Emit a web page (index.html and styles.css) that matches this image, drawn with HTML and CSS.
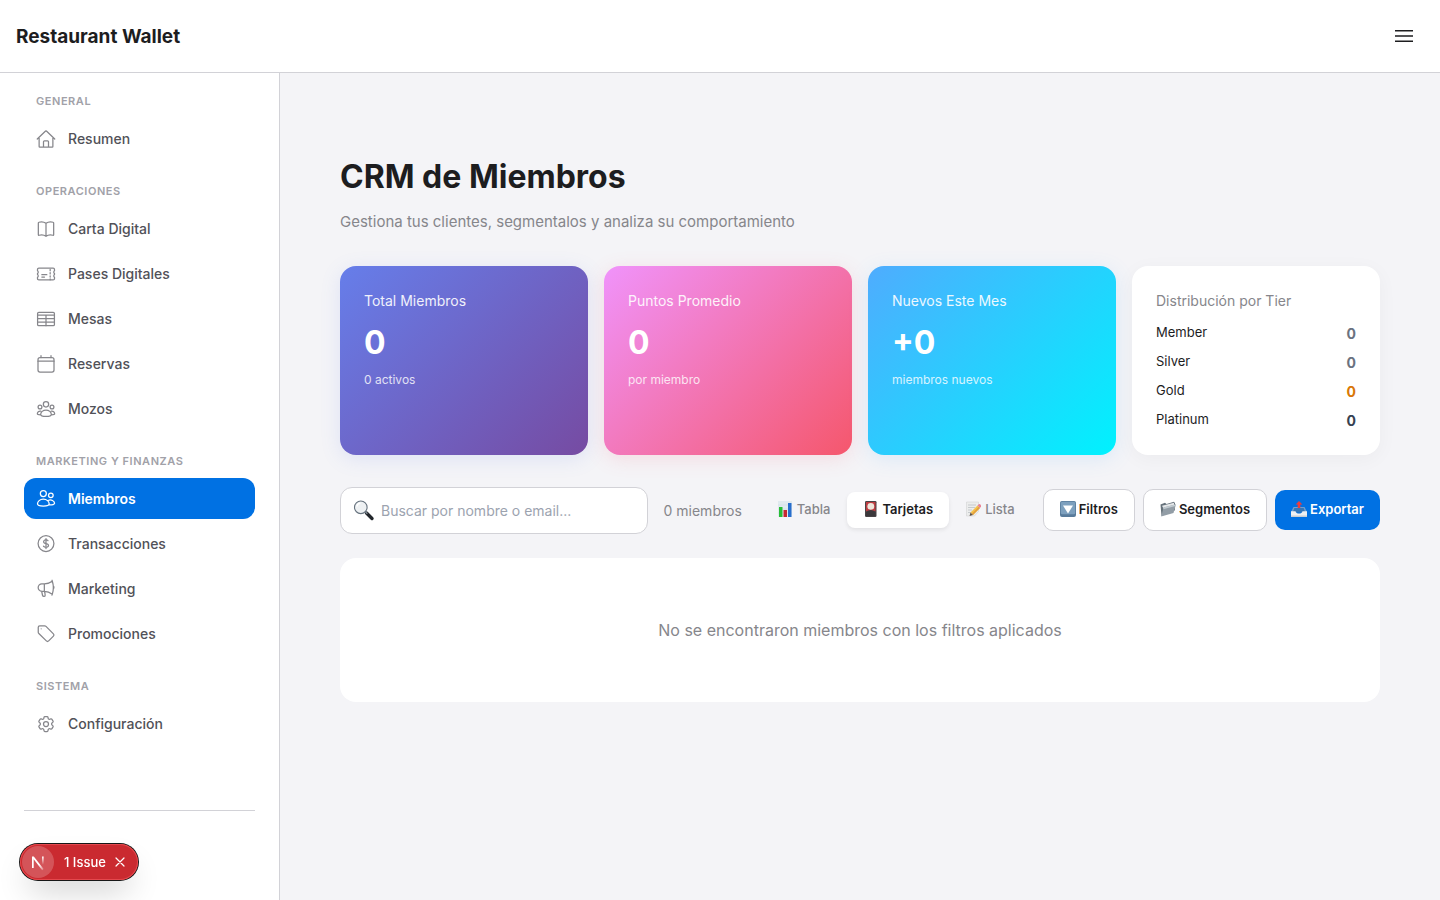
FILE: index.html
```html
<!DOCTYPE html>
<html lang="es">
<head>
    <meta charset="UTF-8">
    <meta name="viewport" content="width=device-width, initial-scale=1.0">
    <title>Restaurant Wallet</title>
    <link rel="stylesheet" href="styles.css">
</head>
<body>
    <header class="topbar">
        <div class="brand">Restaurant Wallet</div>
        <button class="menu-button" type="button" aria-label="Abrir menú">
            <svg width="24" height="24" viewBox="0 0 24 24"><path d="M3 6.75h18M3 12h18M3 17.25h18"/></svg>
        </button>
    </header>

    <div class="layout">
        <aside class="sidebar">
            <nav>
                <section class="nav-section">
                    <h2>General</h2>
                    <a href="#resumen" class="nav-item">
                        <svg viewBox="0 0 24 24"><path d="M3.75 9.9V21c0 .4.3.75.75.75h15c.4 0 .75-.3.75-.75V9.9M9 21.75v-6.4c0-.6.5-1.1 1.1-1.1h3.8c.6 0 1.1.5 1.1 1.1v6.4M22.5 12 12.5 2.4a.8.8 0 0 0-1 0L1.5 12"/></svg>
                        Resumen
                    </a>
                </section>

                <section class="nav-section">
                    <h2>Operaciones</h2>
                    <a href="#carta" class="nav-item">
                        <svg viewBox="0 0 24 24"><path d="M12 5.2C9.8 3.5 6 3 3.4 3.900c-.4.1-.6.4-.6.8v14.1c0 .5.4.8.9.7 2.6-.8 6-.5 8.3 1.3 2.3-1.8 5.7-2.1 8.3-1.3.5.1.9-.2.9-.7V4.700c0-.4-.2-.7-.6-.8C18 3 14.200 3.500 12 5.200zM12 5.200v15.600"/></svg>
                        Carta Digital
                    </a>
                    <a href="#pases" class="nav-item">
                        <svg viewBox="0 0 24 24"><path d="M3.4 5h17.2c.9 0 1.600.7 1.600 1.600v1.600a2 2 0 0 0 0 3.300v1.200a2 2 0 0 0 0 3.300v1.600c0 .8-.7 1.400-1.600 1.400H3.400c-.9 0-1.600-.6-1.600-1.400V16a2 2 0 0 0 0-3.300v-1.200a2 2 0 0 0 0-3.300V6.600C1.800 5.700 2.500 5 3.400 5zM7 12.800h6M7 15.600h3.200"/><path stroke-dasharray="1.6 2.2" d="M17 6.500V19"/></svg>
                        Pases Digitales
                    </a>
                    <a href="#mesas" class="nav-item">
                        <svg viewBox="0 0 24 24"><rect x="1.9" y="4" width="20.2" height="16" rx="1.5"/><path d="M2 7.400h20M2 11.600h20M2 15.800h20M12 7.400V20"/></svg>
                        Mesas
                    </a>
                    <a href="#reservas" class="nav-item">
                        <svg viewBox="0 0 24 24"><rect x="2.4" y="4.4" width="19.2" height="17.2" rx="2.4"/><path d="M6 2v2.200M18 2v2.200M2.400 8.600h19.200"/></svg>
                        Reservas
                    </a>
                    <a href="#mozos" class="nav-item">
                        <svg viewBox="0 0 24 24"><circle cx="12" cy="6.4" r="3.2"/><circle cx="4.8" cy="9.6" r="2.3"/><circle cx="19.2" cy="9.6" r="2.3"/><path d="M12 13.300c-3.600 0-6.400 2.400-6.400 5.200 0 1.300 2.900 2.300 6.400 2.300s6.400-1 6.400-2.300c0-2.800-2.800-5.200-6.400-5.200zM5.700 14.600c-2.400-.4-4.100 1.300-4.100 3.200 0 .7 1.500 1.200 3.800 1.200M18.300 14.600c2.400-.4 4.100 1.300 4.100 3.200 0 .7-1.500 1.200-3.800 1.200"/></svg>
                        Mozos
                    </a>
                </section>

                <section class="nav-section">
                    <h2>Marketing y Finanzas</h2>
                    <a href="#miembros" class="nav-item active" aria-current="page">
                        <svg viewBox="0 0 24 24"><circle cx="8.8" cy="5.4" r="3.6"/><circle cx="17.8" cy="7.6" r="2.8"/><path d="M8.800 12.200c-4.200 0-7 2.800-7 5.600 0 1.600 2.800 2.800 7 2.800s7-1.200 7-2.800c0-2.800-2.800-5.600-7-5.600zM14.400 13.800c3.800-1.700 7.900.6 7.900 3.400 0 1.300-2.500 2-6.400 1.900"/></svg>
                        Miembros
                    </a>
                    <a href="#transacciones" class="nav-item">
                        <svg viewBox="0 0 24 24"><circle cx="12" cy="11.5" r="9.5"/><path transform="translate(0 -.5)" d="M12 6v12m-3-2.818.879.659c1.171.879 3.070.879 4.242 0 1.172-.879 1.172-2.303 0-3.182C13.536 12.219 12.768 12 12 12c-.725 0-1.450-.220-2.003-.659-1.106-.879-1.106-2.303 0-3.182s2.900-.879 4.006 0l.415.330"/></svg>
                        Transacciones
                    </a>
                    <a href="#marketing" class="nav-item">
                        <svg viewBox="0 0 24 24"><path d="M10 5.800H7a4.400 4.400 0 0 0-4.400 4.400A4.400 4.400 0 0 0 7 14.700h3c3.200 0 6.400 1 9.600 3.500C21 13.500 21 7 19.600 2.700 16.600 4.900 13.300 5.800 10 5.800zM10 5.800v8.900M6.800 14.700l1 4.800c.2.900.8 1.400 1.700 1.400.8 0 1.500-.6 1.500-1.500 0-1.300-.4-3-.8-4.700M19.200 1.500l.4 1.200M19.200 19.400l.4-1.200M20.700 8.500c1.100.9 1.100 2.700 0 3.600"/></svg>
                        Marketing
                    </a>
                    <a href="#promociones" class="nav-item">
                        <svg viewBox="0 0 24 24"><path d="M10.300 2.200H4.500c-1 0-1.800.8-1.800 1.800v5.800c0 .6.2 1.200.7 1.600l9 8.900c.8.8 2 .8 2.800 0l5.700-5.700c.8-.8.8-2 0-2.800l-8.900-9c-.4-.4-1-.6-1.700-.6z"/><circle class="dot" cx="6.3" cy="5.8" r="1"/></svg>
                        Promociones
                    </a>
                </section>

                <section class="nav-section">
                    <h2>Sistema</h2>
                    <a href="#configuracion" class="nav-item">
                        <svg viewBox="0 0 24 24"><path d="M9.594 3.940c.090-.542.560-.940 1.110-.940h2.593c.550 0 1.020.398 1.110.940l.213 1.281c.063.374.313.686.645.870.074.040.147.083.220.127.325.196.720.257 1.075.124l1.217-.456a1.125 1.125 0 0 1 1.370.490l1.296 2.247a1.125 1.125 0 0 1-.260 1.431l-1.003.827c-.293.241-.438.613-.430.992a7.723 7.723 0 0 1 0 .255c-.008.378.137.750.430.991l1.004.827c.424.350.534.955.260 1.430l-1.298 2.247a1.125 1.125 0 0 1-1.369.491l-1.217-.456c-.355-.133-.750-.072-1.076.124a6.470 6.470 0 0 1-.220.128c-.331.183-.581.495-.644.869l-.213 1.281c-.090.543-.560.940-1.110.940h-2.594c-.550 0-1.019-.398-1.110-.940l-.213-1.281c-.062-.374-.312-.686-.644-.870a6.520 6.520 0 0 1-.220-.127c-.325-.196-.720-.257-1.076-.124l-1.217.456a1.125 1.125 0 0 1-1.369-.490l-1.297-2.247a1.125 1.125 0 0 1 .260-1.431l1.004-.827c.292-.240.437-.613.430-.991a6.932 6.932 0 0 1 0-.255c.007-.380-.138-.751-.430-.992l-1.004-.827a1.125 1.125 0 0 1-.260-1.430l1.297-2.247a1.125 1.125 0 0 1 1.370-.491l1.216.456c.356.133.751.072 1.076-.124.072-.044.146-.086.220-.128.332-.183.582-.495.644-.869l.214-1.280Z"/><circle cx="12" cy="12" r="3"/></svg>
                        Configuración
                    </a>
                </section>
            </nav>
            <div class="sidebar-footer"></div>
        </aside>

        <main class="content">
            <h1>CRM de Miembros</h1>
            <p class="subtitle">Gestiona tus clientes, segmentalos y analiza su comportamiento</p>

            <div class="stats">
                <div class="card purple">
                    <div class="card-label">Total Miembros</div>
                    <div class="card-value">0</div>
                    <div class="card-note">0 activos</div>
                </div>
                <div class="card pink">
                    <div class="card-label">Puntos Promedio</div>
                    <div class="card-value">0</div>
                    <div class="card-note">por miembro</div>
                </div>
                <div class="card cyan">
                    <div class="card-label">Nuevos Este Mes</div>
                    <div class="card-value">+0</div>
                    <div class="card-note">miembros nuevos</div>
                </div>
                <div class="card tiers">
                    <div class="card-label">Distribución por Tier</div>
                    <div class="tier"><span>Member</span><b>0</b></div>
                    <div class="tier"><span>Silver</span><b>0</b></div>
                    <div class="tier gold"><span>Gold</span><b>0</b></div>
                    <div class="tier platinum"><span>Platinum</span><b>0</b></div>
                </div>
            </div>

            <div class="toolbar">
                <label class="search">
                    <svg width="22" height="22" viewBox="0 0 22 22">
                        <path d="M13.5 13 19 18.500" stroke="#22262b" stroke-width="3.4" stroke-linecap="round"/>
                        <path d="m12.3 11.800 2 2" stroke="#7d8791" stroke-width="1.6"/>
                        <circle cx="7.8" cy="7.3" r="6.3" fill="#eef1f3" stroke="#66727e" stroke-width="1.1"/>
                        <path d="M3.800 6.700a4.200 4.200 0 0 1 3.600-3.600" fill="none" stroke="#fff" stroke-width="1.2"/>
                    </svg>
                    <input type="text" placeholder="Buscar por nombre o email..." aria-label="Buscar miembros">
                </label>
                <span class="count">0 miembros</span>

                <div class="views">
                    <button type="button" class="view">
                        <svg class="emoji" viewBox="0 0 16 16"><path fill="#dfe9ef" d="M0 0h14v16H0z"/><path stroke="#cbd7df" stroke-width=".5" d="M0 4h14M0 8h14M0 12h14"/><path fill="#12b822" d="M1 6h3.500v10H1z"/><path fill="#c3131c" d="M5.500 9H9v7H5.500z"/><path fill="#1260c9" d="M10 2h3.500v14H10z"/></svg>
                        Tabla
                    </button>
                    <button type="button" class="view active">
                        <svg class="emoji" viewBox="0 0 16 16"><rect x="2" width="11.500" height="16" rx="1.2" fill="#353033"/><path fill="#b8282d" d="M3 1h9.500v9.500c-3-2-6.500-2-9.500 0z"/><circle cx="7.8" cy="5.400" r="3.400" fill="#eee4d8"/><path fill="#262326" d="M3 11c3-2 6.500-2 9.500 0v4H3z"/></svg>
                        Tarjetas
                    </button>
                    <button type="button" class="view">
                        <svg class="emoji" viewBox="0 0 16 16"><path fill="#eceded" stroke="#c8c9ca" stroke-width=".5" d="M.5 1h12v9.500l-4 4.500h-8z"/><path stroke="#b2b6ba" stroke-width=".7" d="M2 4h8M2 6.500h7M2 9h4M2 11.500h3"/><path fill="#f4bd3a" d="m4.500 11.500 7-7L14 7l-7 7z"/><path fill="#e2972b" d="m5.800 12.800 7-7L14 7l-7 7z"/><path fill="#e8778a" d="M11.500 4.500 13 3c1.200-.2 2.300.9 2 2.400L14 7z"/><path fill="#554439" d="M4.500 11.500 7 14l-3.500 1z"/></svg>
                        Lista
                    </button>
                </div>

                <div class="actions">
                    <button type="button" class="action">
                        <svg class="emoji" viewBox="0 0 16 16"><rect width="16" height="16" rx="2" fill="#587b9b"/><rect x=".8" y=".8" width="14.400" height="12.500" rx="1.5" fill="#7da0be"/><path fill="#fff" d="M3 4.500h10L8 12.500z"/></svg>
                        Filtros
                    </button>
                    <button type="button" class="action">
                        <svg class="emoji" viewBox="0 0 16 16"><path fill="#66727b" d="M.5 3.500 5 1.800 6.500 3 14 .8l1 1.500v7L1.500 15z"/><path fill="#e5e8ea" d="m2 4.800 12-3v3L3.500 7.500z"/><path fill="#929da6" d="M3.600 6.500 16 3.200 13.500 12 1.200 15.500z"/><path fill="#c2cbd1" d="M3.600 6.500 16 3.200l-.5 1.700L3.200 8.200z"/></svg>
                        Segmentos
                    </button>
                    <button type="button" class="action primary">
                        <svg class="emoji" viewBox="0 0 16 16"><path fill="#6f9fd0" d="M2.500 6h11L16 11H0z"/><path fill="#3476b8" d="M3.300 7h9.400l1.500 4.500H1.800z"/><path fill="#eef0f2" d="M0 10.200h4.500c.5 3.200 6.500 3.200 7 0H16V15c0 .6-.4 1-1 1H1c-.6 0-1-.4-1-1z"/><path fill="#c9ced3" d="M0 14.500h16v.5c0 .6-.4 1-1 1H1c-.6 0-1-.4-1-1z"/><path fill="#ee3d3c" d="M8 0 4.700 3.500h2V7h2.600V3.500h2z"/></svg>
                        Exportar
                    </button>
                </div>
            </div>

            <div class="empty">No se encontraron miembros con los filtros aplicados</div>
        </main>
    </div>

    <div class="issue-badge">
        <button type="button" class="issue-logo" aria-label="Herramientas de desarrollo">
            <svg width="32" height="32" viewBox="0 0 32 32">
                <defs>
                    <linearGradient id="fadeA" x1="0" y1="0" x2="1" y2="1">
                        <stop offset=".6" stop-color="#fff"/>
                        <stop offset="1" stop-color="#fff" stop-opacity=".2"/>
                    </linearGradient>
                    <linearGradient id="fadeB" x1="0" y1="0" x2="0" y2="1">
                        <stop offset="0" stop-color="#fff"/>
                        <stop offset="1" stop-color="#fff" stop-opacity="0"/>
                    </linearGradient>
                </defs>
                <path fill="url(#fadeA)" d="M10 10.500h1.800l9.800 12.600-1.400 1.100-8.500-11V22H10z"/>
                <path fill="url(#fadeB)" d="M20 10.500h1.700v8.200H20z"/>
            </svg>
        </button>
        <button type="button" class="issue-text">1 Issue</button>
        <button type="button" class="issue-close" aria-label="Cerrar">
            <svg width="12" height="12" viewBox="0 0 12 12"><path d="m2 2 8 8M10 2l-8 8"/></svg>
        </button>
    </div>
</body>
</html>
```

FILE: styles.css
```css
* {
    box-sizing: border-box;
}

body {
    margin: 0;
    min-height: 100vh;
    display: flex;
    flex-direction: column;
    background: #f4f4f7;
    color: #1d1d1f;
    font-family: Inter, "Liberation Sans", sans-serif;
    font-size: 14px;
}

button {
    font-family: inherit;
    border: none;
    background: none;
    padding: 0;
    cursor: pointer;
}

svg {
    display: block;
    flex-shrink: 0;
}

/* Header */
.topbar {
    display: flex;
    align-items: center;
    justify-content: space-between;
    height: 73px;
    padding: 0 16px;
    background: #fff;
    border-bottom: 1px solid #d2d2d7;
}

.brand {
    font-size: 19px;
    font-weight: 700;
}

.menu-button {
    padding: 8px;
}

.menu-button svg {
    stroke: #1d1d1f;
    stroke-width: 1.5;
}

.layout {
    flex: 1;
    display: flex;
}

/* Sidebar */
.sidebar {
    display: flex;
    flex-direction: column;
    width: 280px;
    flex-shrink: 0;
    padding: 20px 24px 24px;
    background: #fff;
    border-right: 1px solid #d2d2d7;
}

.nav-section {
    display: flex;
    flex-direction: column;
    gap: 4px;
    margin-bottom: 24px;
}

.nav-section h2 {
    margin: 0 0 4px;
    padding: 0 12px;
    color: #a1a1a8;
    font-size: 11px;
    line-height: 17px;
    font-weight: 600;
    letter-spacing: 0.05em;
    text-transform: uppercase;
}

.nav-item {
    display: flex;
    align-items: center;
    gap: 12px;
    height: 41px;
    padding: 0 12px;
    border-radius: 12px;
    color: #515158;
    font-weight: 500;
    text-decoration: none;
}

.nav-item svg {
    width: 20px;
    height: 20px;
    fill: none;
    stroke: #86868b;
    stroke-width: 1.5;
    stroke-linecap: round;
    stroke-linejoin: round;
}

.nav-item .dot {
    fill: #c4c4c8;
    stroke: none;
}

.nav-item.active {
    background: #0071e3;
    color: #fff;
    font-weight: 600;
}

.nav-item.active svg {
    stroke: #fff;
}

.sidebar-footer {
    height: 66px;
    margin-top: auto;
    border-top: 1px solid #d2d2d7;
}

/* Content */
.content {
    flex: 1;
    min-width: 0;
    padding: 80px 60px;
}

h1 {
    margin: 0 0 8px;
    font-size: 32px;
    line-height: 48px;
    font-weight: 700;
}

.subtitle {
    margin: 0 0 32px;
    color: #86868b;
    font-size: 15px;
    line-height: 25px;
}

.stats {
    display: grid;
    grid-template-columns: repeat(4, 1fr);
    gap: 16px;
    margin-bottom: 32px;
}

.card {
    padding: 24px;
    border-radius: 16px;
    color: #fff;
}

.purple {
    background: linear-gradient(135deg, #667eea 0%, #764ba2 100%);
    box-shadow: 0 4px 20px rgba(102, 126, 234, 0.15);
}

.pink {
    background: linear-gradient(135deg, #f093fb 0%, #f5576c 100%);
    box-shadow: 0 4px 20px rgba(245, 87, 108, 0.15);
}

.cyan {
    background: linear-gradient(135deg, #4facfe 0%, #00f2fe 100%);
    box-shadow: 0 4px 20px rgba(79, 172, 254, 0.15);
}

.tiers {
    background: #fff;
    color: #1d1d1f;
    box-shadow: 0 4px 20px rgba(0, 0, 0, 0.04);
}

.card-label {
    margin-bottom: 8px;
    font-size: 14px;
    line-height: 21px;
    opacity: 0.9;
}

.card-value {
    margin-bottom: 4px;
    font-size: 32px;
    line-height: 48px;
    font-weight: 700;
}

.card-note {
    font-size: 12px;
    line-height: 18px;
    opacity: 0.8;
}

.tiers .card-label {
    margin-bottom: 12px;
    color: #86868b;
    opacity: 1;
}

.tier {
    display: flex;
    justify-content: space-between;
    line-height: 21px;
    font-size: 13px;
}

.tier span {
    line-height: 19px;
}

.tier + .tier {
    margin-top: 8px;
}

.tier b {
    color: #6b7280;
    font-size: 14px;
    font-weight: 700;
}

.tier.gold b {
    color: #d97706;
}

.tier.platinum b {
    color: #374151;
}

/* Search and actions */
.toolbar {
    display: flex;
    align-items: center;
    margin-bottom: 24px;
}

.search {
    flex: 1;
    display: flex;
    align-items: center;
    gap: 6px;
    min-width: 0;
    height: 47px;
    margin-right: 16px;
    padding: 0 12px;
    background: #fff;
    border: 1px solid #d2d2d7;
    border-radius: 12px;
}

.search input {
    flex: 1;
    min-width: 0;
    padding: 0;
    border: none;
    outline: none;
    font-family: inherit;
    font-size: 14px;
    background: none;
}

.search input::placeholder {
    color: #9ca3af;
}

.count {
    margin-right: 16px;
    color: #86868b;
    white-space: nowrap;
}

.views {
    display: flex;
    gap: 1px;
    padding: 4px;
    margin: 0 8px 2px 0;
}

.view,
.action {
    display: flex;
    align-items: center;
    gap: 3px;
    padding: 0 16px 2px;
    font-size: 13px;
    white-space: nowrap;
}

.emoji {
    width: 16px;
    height: 16px;
}

.view {
    height: 36px;
    border-radius: 8px;
    color: #86868b;
    font-weight: 500;
}

.view .emoji {
    opacity: 0.9;
}

.view.active {
    background: #fff;
    color: #1d1d1f;
    font-weight: 600;
    box-shadow: 0 2px 4px rgba(0, 0, 0, 0.08);
}

.actions {
    display: flex;
    align-items: center;
    gap: 8px;
    margin-bottom: 2px;
}

.action {
    height: 42px;
    background: #fff;
    border: 1px solid #d2d2d7;
    border-radius: 10px;
    color: #1d1d1f;
    font-weight: 600;
}

.action.primary {
    height: 40px;
    background: #0071e3;
    border: none;
    color: #fff;
}

.empty {
    padding: 60px 24px;
    background: #fff;
    border-radius: 16px;
    color: #86868b;
    font-size: 16px;
    line-height: 24px;
    text-align: center;
}

/* Floating dev badge */
.issue-badge {
    position: fixed;
    left: 20px;
    bottom: 20px;
    display: flex;
    align-items: center;
    height: 36px;
    padding: 0 12px 0 2px;
    background: #ca2a30;
    border-radius: 18px;
    box-shadow: 0 0 0 1px #171717, inset 0 0 0 1px #e5484d, 0 16px 32px -8px rgba(0, 0, 0, 0.24);
}

.issue-logo {
    width: 32px;
    height: 32px;
    background: rgba(255, 255, 255, 0.2);
    border-radius: 50%;
}

.issue-text {
    margin-left: 10px;
    color: #fff;
    font-size: 13px;
    font-weight: 500;
}

.issue-close {
    margin-left: 8px;
}

.issue-close svg {
    stroke: #fff;
    stroke-width: 1.2;
    stroke-linecap: round;
}
```
